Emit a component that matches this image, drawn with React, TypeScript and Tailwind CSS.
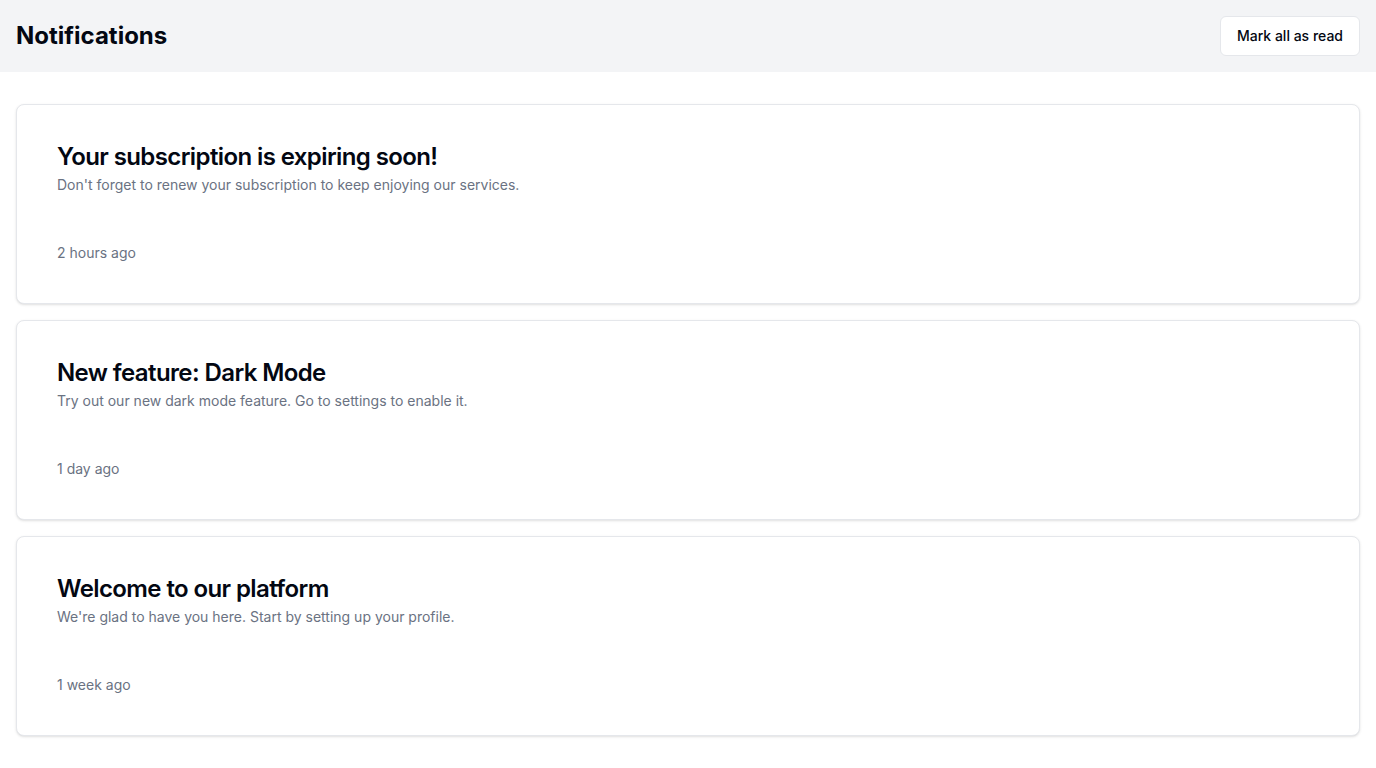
import React from 'react';

const notifications = [
    {
        title: 'Your subscription is expiring soon!',
        body: "Don't forget to renew your subscription to keep enjoying our services.",
        time: '2 hours ago',
    },
    {
        title: 'New feature: Dark Mode',
        body: 'Try out our new dark mode feature. Go to settings to enable it.',
        time: '1 day ago',
    },
    {
        title: 'Welcome to our platform',
        body: "We're glad to have you here. Start by setting up your profile.",
        time: '1 week ago',
    },
];

export default function App() {
    return (
        <div className="min-h-screen bg-white font-['Inter',sans-serif] text-gray-950">
            <header className="h-[72px] bg-gray-100 flex items-center justify-between px-4">
                <h1 className="text-2xl font-bold">Notifications</h1>
                <button className="h-10 px-4 rounded-md border border-gray-200 bg-white text-sm font-medium">
                    Mark all as read
                </button>
            </header>

            <main className="px-4 pt-8 flex flex-col gap-4">
                {notifications.map((n) => (
                    <div key={n.title} className="rounded-lg border border-gray-200 bg-white shadow-sm p-10">
                        <div className="flex flex-col gap-1.5">
                            <h2 className="text-2xl font-semibold leading-none tracking-tight">{n.title}</h2>
                            <p className="text-sm text-gray-500">{n.body}</p>
                        </div>
                        <div className="mt-12 text-sm text-gray-500">{n.time}</div>
                    </div>
                ))}
            </main>
        </div>
    );
}
